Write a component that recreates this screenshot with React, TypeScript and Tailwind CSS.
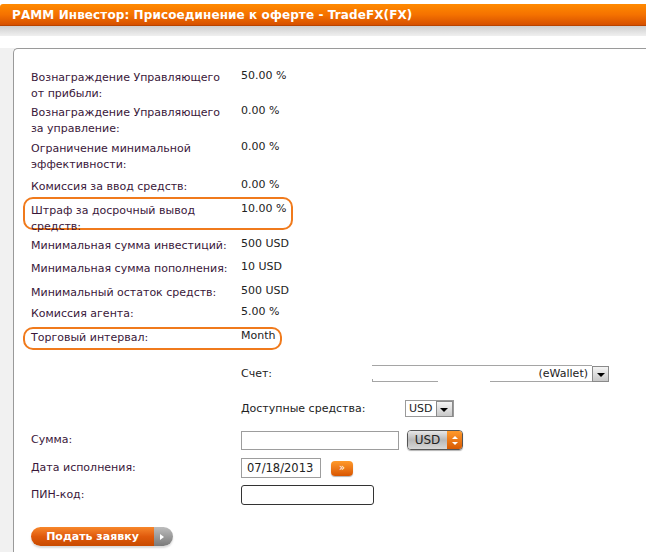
const rows = [
  { label: "Вознаграждение Управляющего от прибыли:", value: "50.00 %", h: "h-[35px]" },
  { label: "Вознаграждение Управляющего за управление:", value: "0.00 %", h: "h-[36px]" },
  { label: "Ограничение минимальной эффективности:", value: "0.00 %", h: "h-[38px]" },
  { label: "Комиссия за ввод средств:", value: "0.00 %", h: "h-[24px]" },
  { label: "Штраф за досрочный вывод средств:", value: "10.00 %", h: "h-[35px]", mark: "w-[270px] h-[33px] top-[-16px]" },
  { label: "Минимальная сумма инвестиций:", value: "500 USD", h: "h-[23px]" },
  { label: "Минимальная сумма пополнения:", value: "10 USD", h: "h-[24px]" },
  { label: "Минимальный остаток средств:", value: "500 USD", h: "h-[21px]" },
  { label: "Комиссия агента:", value: "5.00 %", h: "h-[24px]" },
  { label: "Торговый интервал:", value: "Month", h: "h-[25px]", mark: "w-[259px] h-[23px] top-[-13px]" },
];

const Arrow = () => (
  <div className="w-[17px] h-[16px] border border-[#8a8a8a] bg-gradient-to-b from-[#f4f4f4] to-[#c8c8c8] flex items-center justify-center">
    <div className="w-0 h-0 border-l-[4px] border-r-[4px] border-t-[4px] border-l-transparent border-r-transparent border-t-black mt-[2px]" />
  </div>
);

const App = () => {
  return (
    <div className="w-[646px] h-[552px] bg-white overflow-hidden text-[11px] leading-[16px] text-[#3a173a] font-['DejaVu_Sans',Verdana,sans-serif]">
      <div className="pt-[4px]">
        <div className="h-[22px] rounded-tl-[3px] bg-gradient-to-b from-[#ff8a00] via-[#f57200] to-[#d65000] border-b border-[#b84400] pl-[12px] flex items-center">
          <span className="text-white font-bold text-[12px] tracking-[0.1px]">
            РАММ Инвестор: Присоединение к оферте - TradeFX(FX)
          </span>
        </div>
      </div>
      <div className="h-[10px] bg-gradient-to-b from-[#cfcfcf] to-[#f0f0f0]" />
      <div className="flex h-[516px] bg-[#f1f1f1]">
        <div className="w-[13px] shrink-0" />
        <div className="flex-1 flex flex-col">
          <div className="h-[12px] bg-white -ml-[13px] pl-[13px]">
            <div className="h-full bg-white" />
          </div>
          <div className="flex-1 bg-white border-t border-l border-[#9a9a9a] rounded-tl-[5px] pl-[17px] pt-[21px]">
            {rows.map((r) => (
              <div key={r.label} className={`flex ${r.h}`}>
                <div className="w-[210px] pr-[10px] relative">
                  {r.mark && (
                    <div
                      className={`absolute left-[-8px] ${r.mark} rounded-[10px] border-2 border-[#f07a1c] mt-[10px]`}
                    />
                  )}
                  <span className="relative">{r.label}</span>
                </div>
                <div className="text-[#222] -mt-[2px]">{r.value}</div>
              </div>
            ))}

            <div className="flex items-center mt-[10px] ml-[210px] text-[#222]">
              <div className="w-[131px]">Счет:</div>
              <div className="flex items-center">
                <div className="w-[220px] h-[17px] border-t border-[#a5a5a5] relative flex items-center justify-end pr-[4px] text-[#222]">
                  (eWallet)
                  <div className="absolute left-0 bottom-0 w-[66px] h-[1px] bg-[#a5a5a5]" />
                  <div className="absolute left-[118px] bottom-0 w-[102px] h-[1px] bg-[#a5a5a5]" />
                  <div className="absolute left-0 bottom-0 w-[1px] h-[3px] bg-[#a5a5a5]" />
                </div>
                <Arrow />
              </div>
            </div>

            <div className="flex items-center mt-[18px] ml-[210px] text-[#222]">
              <div className="w-[164px]">Доступные средства:</div>
              <div className="flex items-center h-[17px] border border-[#9a9a9a]">
                <span className="px-[3px] text-[#222]">USD</span>
                <Arrow />
              </div>
            </div>

            <div className="flex items-center mt-[13px]">
              <div className="w-[210px]">Сумма:</div>
              <div className="w-[158px] h-[19px] border border-[#9d9d9d]" />
              <div className="ml-[8px] w-[56px] h-[20px] rounded-[4px] border border-[#555] overflow-hidden flex shadow-[0_1px_1px_rgba(0,0,0,0.3)]">
                <div className="flex-1 bg-gradient-to-b from-[#e8e8e8] via-[#b8b8b8] to-[#d8d8d8] flex items-center justify-center text-[#222] text-[12px]">
                  USD
                </div>
                <div className="w-[15px] bg-gradient-to-b from-[#ff9a2a] to-[#d85a00] flex flex-col items-center justify-center gap-[3px]">
                  <div className="w-0 h-0 border-l-[3px] border-r-[3px] border-b-[3px] border-l-transparent border-r-transparent border-b-white" />
                  <div className="w-0 h-0 border-l-[3px] border-r-[3px] border-t-[3px] border-l-transparent border-r-transparent border-t-white" />
                </div>
              </div>
            </div>

            <div className="flex items-center mt-[8px]">
              <div className="w-[210px]">Дата исполнения:</div>
              <div className="w-[80px] h-[20px] border border-[#9d9d9d] flex items-center pl-[5px] text-[#222] text-[11.5px]">
                07/18/2013
              </div>
              <div className="ml-[10px] w-[22px] h-[15px] rounded-[4px] bg-gradient-to-b from-[#ff9a2a] to-[#d85500] flex items-center justify-center text-white text-[10px] leading-none shadow-[0_1px_1px_rgba(0,0,0,0.3)]">
                »
              </div>
            </div>

            <div className="flex items-center mt-[7px]">
              <div className="w-[210px]">ПИН-код:</div>
              <div className="w-[133px] h-[20px] border border-[#333] rounded-[3px]" />
            </div>

            <div className="mt-[22px] w-[142px] h-[19px] rounded-full overflow-hidden flex shadow-[0_2px_2px_rgba(0,0,0,0.15)]">
              <div className="w-[123px] bg-gradient-to-b from-[#f7862a] via-[#e05a0c] to-[#c84a00] flex items-center justify-center text-white font-bold text-[11px]">
                Подать заявку
              </div>
              <div className="flex-1 bg-gradient-to-b from-[#bdbdbd] to-[#7a7a7a] flex items-center pl-[6px]">
                <div className="w-0 h-0 border-t-[3px] border-b-[3px] border-l-[4px] border-t-transparent border-b-transparent border-l-white" />
              </div>
            </div>
          </div>
        </div>
      </div>
    </div>
  );
};

export default App;
